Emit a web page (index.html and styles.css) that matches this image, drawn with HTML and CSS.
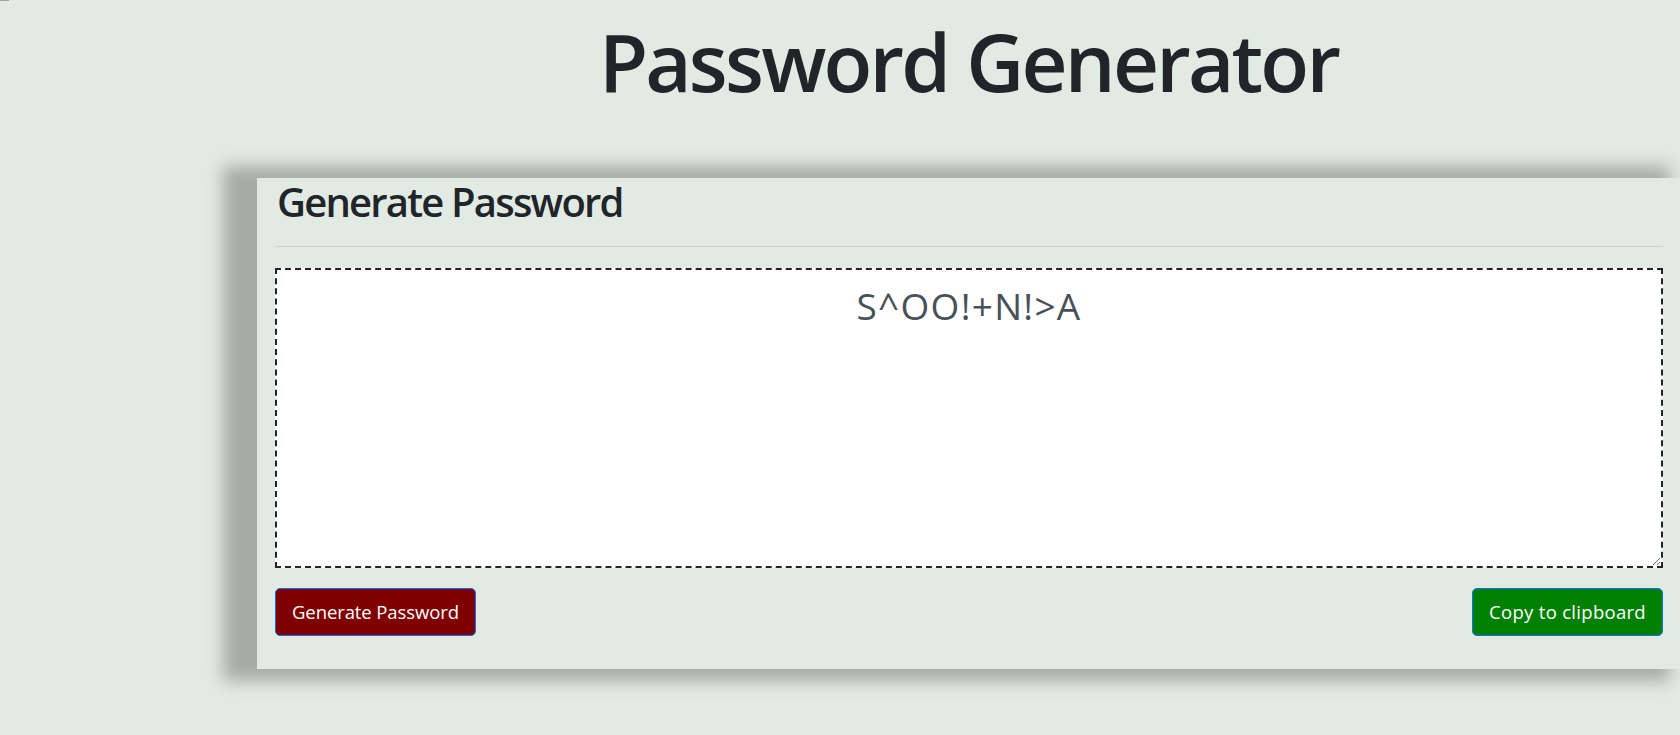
FILE: index.html
```html
<!DOCTYPE html>
<html lang="en">
<head>
<meta charset="utf-8">
<title>Password Generator</title>
<link rel="stylesheet" href="styles.css">
</head>
<body>
<div class="topmark"></div>
<div class="wrapper">
  <header>
    <h1 class="title">Password Generator</h1>
  </header>
  <div class="card">
    <div class="card-header">
      <h2 class="card-title">Generate Password</h2>
    </div>
    <hr class="divider">
    <div class="card-body">
      <textarea readonly class="password" aria-label="Generated Password">S^OO!+N!&gt;A</textarea>
    </div>
    <div class="card-footer">
      <button class="btn btn-generate">Generate Password</button>
      <button class="btn btn-copy">Copy to clipboard</button>
    </div>
  </div>
</div>
</body>
</html>
```

FILE: styles.css
```css
html, body {
  margin: 0;
  padding: 0;
}

body {
  background: #e1ebe4;
  font-family: "Open Sans", "Noto Sans", sans-serif;
  color: #212529;
}

.topmark {
  width: 9px;
  height: 1px;
  background: #a0a4a2;
}

.wrapper {
  padding-left: 257px;
  padding-bottom: 40px;
}

.title {
  margin: 12px 0 0;
  text-align: center;
  font-size: 80px;
  font-weight: 600;
  line-height: 96px;
  letter-spacing: -2.8px;
  color: #212529;
}

.card {
  margin-top: 69px;
  background: #e1ebe4;
  padding: 0 17px 33px 18px;
  box-shadow: -22px 0 16px 12px rgba(0, 0, 0, 0.27);
}

.card-title {
  margin: 0 0 20px 2px;
  font-size: 40px;
  font-weight: 600;
  line-height: 48px;
  letter-spacing: -1.8px;
}

.divider {
  margin: 0 0 21px;
  border: 0;
  border-top: 1px solid rgba(0, 0, 0, 0.1);
}

.card-body {
  display: flex;
}

.password {
  flex: 1;
  box-sizing: border-box;
  height: 300px;
  margin: 0;
  padding: 8px 16px;
  background: #fff;
  border: 2px dashed #212529;
  border-radius: 0;
  font-family: "Open Sans", "Noto Sans", sans-serif;
  font-size: 37px;
  line-height: 1.5;
  color: #495057;
  text-align: center;
  letter-spacing: 1.3px;
  resize: vertical;
}

.card-footer {
  display: flex;
  justify-content: space-between;
  margin-top: 20px;
}

.btn {
  box-sizing: border-box;
  height: 48px;
  padding: 0 16px;
  border: 1px solid #0d6efd;
  border-radius: 5px;
  font-family: "Open Sans", "Noto Sans", sans-serif;
  font-size: 18.5px;
  line-height: 46px;
  color: #fff;
  cursor: pointer;
}

.btn-generate {
  background: #800000;
  letter-spacing: -0.1px;
}

.btn-copy {
  background: #008000;
  letter-spacing: 0.3px;
}
```
